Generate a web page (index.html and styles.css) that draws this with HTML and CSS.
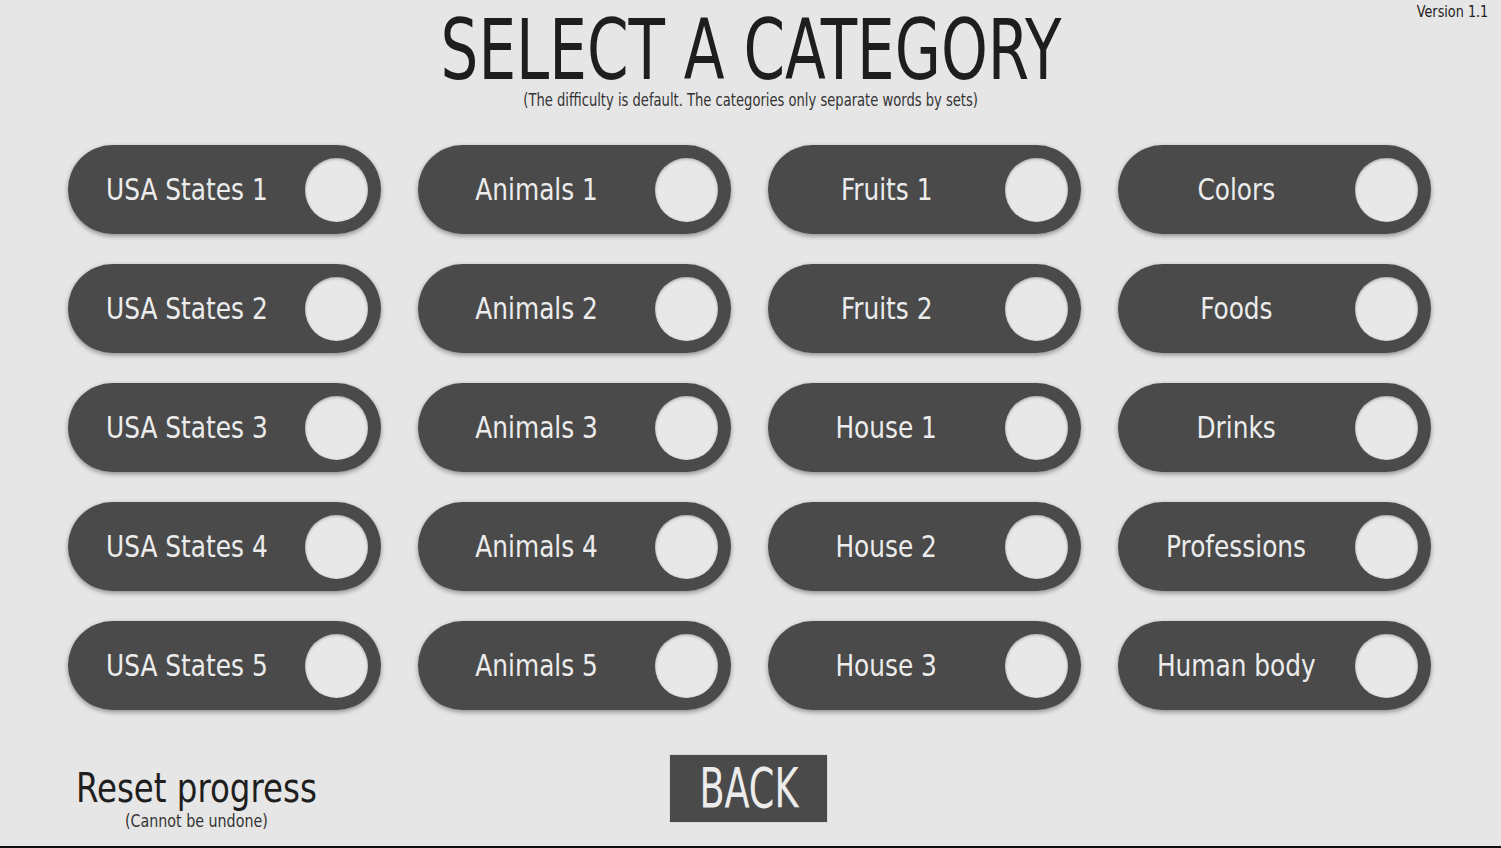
FILE: index.html
```html
<!DOCTYPE html>
<html>
<head>
<meta charset="utf-8">
<link rel="stylesheet" href="styles.css">
</head>
<body>
<div class="screen">
  <div class="version"><span class="version-text">Version 1.1</span></div>
  <header class="head">
    <h1 class="title"><span class="title-text">SELECT A CATEGORY</span></h1>
    <p class="subtitle"><span class="subtitle-text">(The difficulty is default. The categories only separate words by sets)</span></p>
  </header>
  <main class="grid">
    <div class="pill"><span class="label"><span class="label-text">USA States 1</span></span><span class="knob"></span></div>
    <div class="pill"><span class="label"><span class="label-text">Animals 1</span></span><span class="knob"></span></div>
    <div class="pill"><span class="label"><span class="label-text">Fruits 1</span></span><span class="knob"></span></div>
    <div class="pill"><span class="label"><span class="label-text">Colors</span></span><span class="knob"></span></div>
    <div class="pill"><span class="label"><span class="label-text">USA States 2</span></span><span class="knob"></span></div>
    <div class="pill"><span class="label"><span class="label-text">Animals 2</span></span><span class="knob"></span></div>
    <div class="pill"><span class="label"><span class="label-text">Fruits 2</span></span><span class="knob"></span></div>
    <div class="pill"><span class="label"><span class="label-text">Foods</span></span><span class="knob"></span></div>
    <div class="pill"><span class="label"><span class="label-text">USA States 3</span></span><span class="knob"></span></div>
    <div class="pill"><span class="label"><span class="label-text">Animals 3</span></span><span class="knob"></span></div>
    <div class="pill"><span class="label"><span class="label-text">House 1</span></span><span class="knob"></span></div>
    <div class="pill"><span class="label"><span class="label-text">Drinks</span></span><span class="knob"></span></div>
    <div class="pill"><span class="label"><span class="label-text">USA States 4</span></span><span class="knob"></span></div>
    <div class="pill"><span class="label"><span class="label-text">Animals 4</span></span><span class="knob"></span></div>
    <div class="pill"><span class="label"><span class="label-text">House 2</span></span><span class="knob"></span></div>
    <div class="pill"><span class="label"><span class="label-text">Professions</span></span><span class="knob"></span></div>
    <div class="pill"><span class="label"><span class="label-text">USA States 5</span></span><span class="knob"></span></div>
    <div class="pill"><span class="label"><span class="label-text">Animals 5</span></span><span class="knob"></span></div>
    <div class="pill"><span class="label"><span class="label-text">House 3</span></span><span class="knob"></span></div>
    <div class="pill"><span class="label"><span class="label-text">Human body</span></span><span class="knob"></span></div>
  </main>
  <footer class="foot">
    <div class="reset">
      <div class="reset-title">Reset progress</div>
      <div class="reset-note">(Cannot be undone)</div>
    </div>
    <div class="back"><span class="back-text">BACK</span></div>
    <div class="spacer"></div>
  </footer>
</div>
</body>
</html>
```

FILE: styles.css
```css
html, body {
  margin: 0;
  padding: 0;
}
body {
  background: #e6e6e6;
  font-family: "DejaVu Sans", sans-serif;
  font-stretch: condensed;
  color: #222;
}
.screen {
  position: relative;
  width: 1501px;
  height: 848px;
  box-sizing: border-box;
  border-bottom: 2px solid #111;
  overflow: hidden;
}
.version {
  position: absolute;
  top: 2px;
  right: 13px;
  font-size: 16px;
  color: #222;
}
.version-text {
  display: inline-block;
  transform: scaleX(0.89);
  transform-origin: right center;
}
.head {
  text-align: center;
  padding-top: 12px;
}
.title {
  margin: 0;
  font-size: 83px;
  font-weight: normal;
  line-height: 78px;
  color: #1e1e1e;
}
.title-text {
  display: inline-block;
  transform: scaleX(0.798);
}
.subtitle {
  margin: 0;
  font-size: 18px;
  line-height: 20px;
  color: #333;
}
.subtitle-text {
  display: inline-block;
  transform: scaleX(0.81);
}
.grid {
  display: grid;
  grid-template-columns: repeat(4, 313px);
  grid-auto-rows: 89px;
  column-gap: 37px;
  row-gap: 30px;
  padding-left: 68px;
  margin-top: 35px;
}
.pill {
  display: flex;
  align-items: center;
  background: #4a4a4a;
  border-radius: 45px;
  box-shadow: 0 2px 5px rgba(0,0,0,0.4);
}
.label {
  flex: 1;
  text-align: center;
  color: #ececec;
  font-size: 30px;
}
.label-text {
  display: inline-block;
  transform: scaleX(0.92);
}
.knob {
  width: 63px;
  height: 64px;
  margin-right: 13px;
  border-radius: 50%;
  background: #e8e8e8;
  box-shadow: inset 0 1px 3px rgba(0,0,0,0.3);
}
.foot {
  display: grid;
  grid-template-columns: 1fr 159px 1fr;
  align-items: start;
  margin-top: 44px;
}
.reset {
  justify-self: start;
  margin-left: 76px;
  margin-top: 11px;
  text-align: center;
  transform: scaleX(0.88);
  transform-origin: left center;
}
.reset-title {
  font-size: 41px;
  line-height: 46px;
  color: #1e1e1e;
}
.reset-note {
  font-size: 18px;
  line-height: 20px;
  color: #333;
}
.back {
  width: 159px;
  height: 69px;
  margin-left: -2px;
  box-sizing: border-box;
  background: #4a4a4a;
  border: 1px solid #d8d8d8;
  color: #ececec;
  font-size: 55px;
  line-height: 67px;
  text-align: center;
}
.back-text {
  display: inline-block;
  transform: scaleX(0.74);
}
```
